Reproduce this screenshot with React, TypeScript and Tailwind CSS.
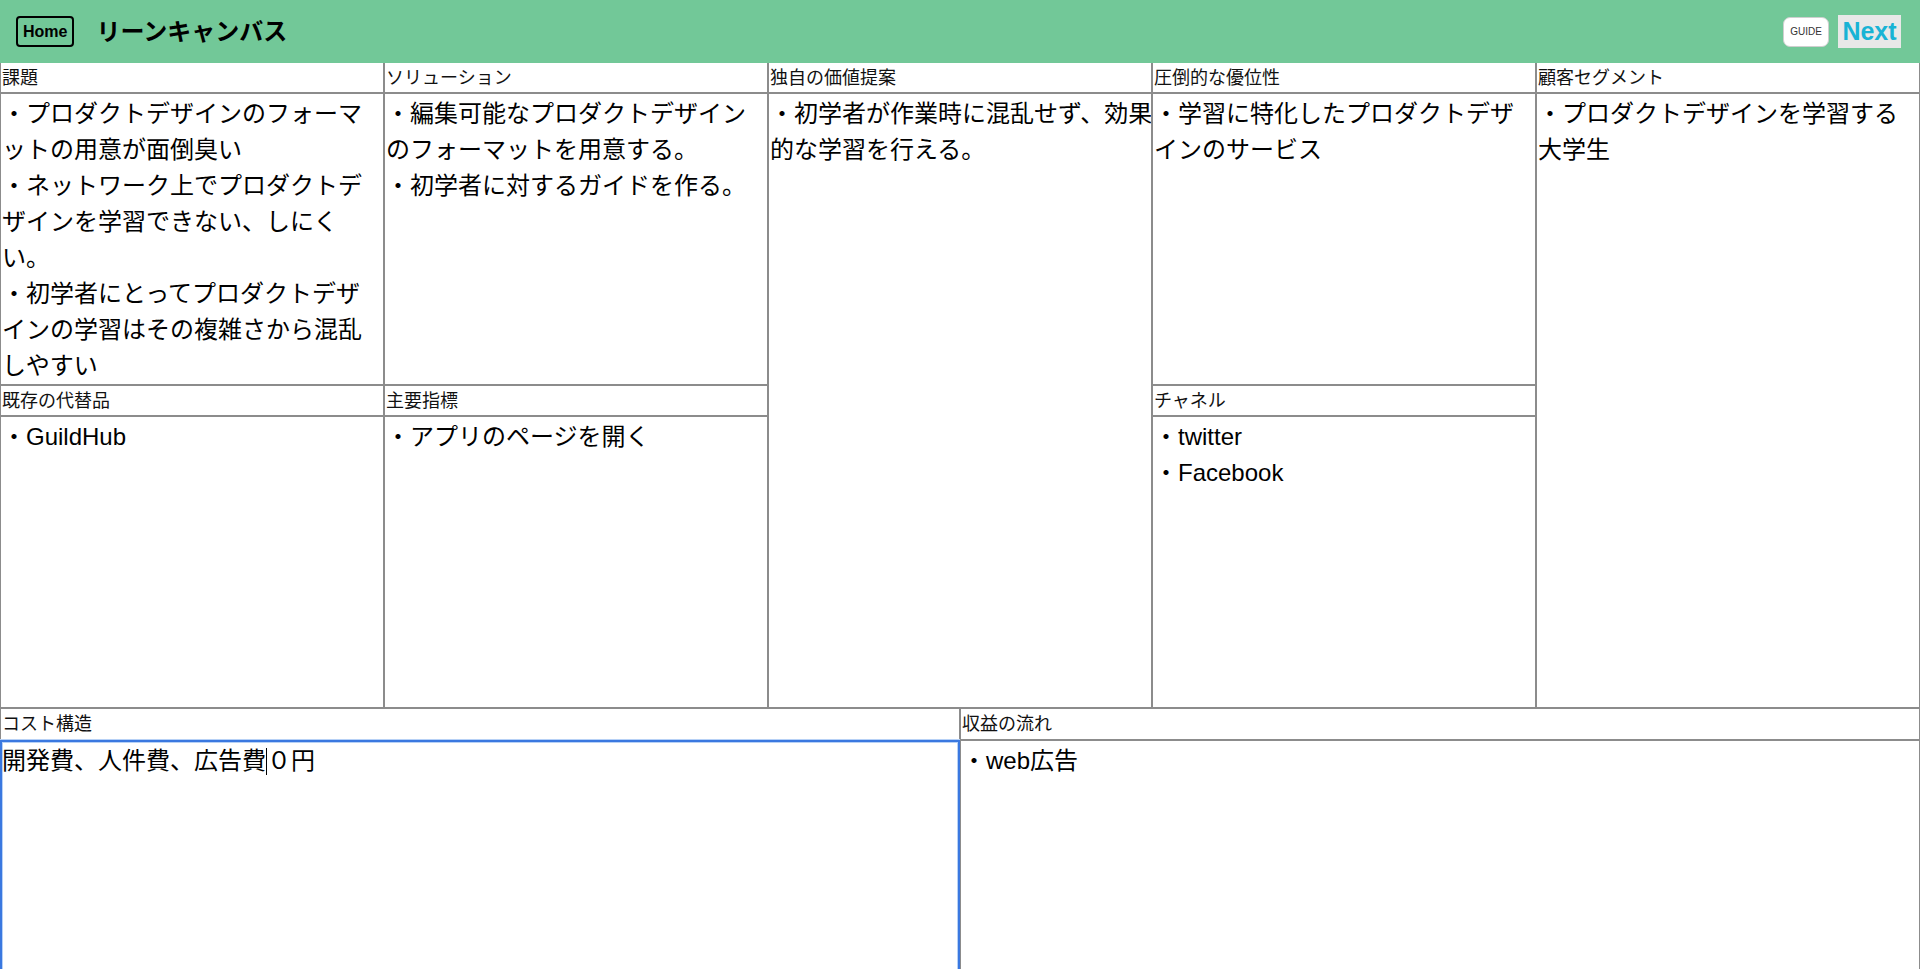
import React from "react";

const FONT = { fontFamily: '"Liberation Sans", "Noto Sans CJK JP", sans-serif' };

function Label({ text, className = "" }: { text: string; className?: string }) {
  return (
    <div className={"border border-[#8c8c8c] flex items-center pl-[1px] text-[18px] leading-none text-[#111] overflow-hidden " + className}>
      <span>{text}</span>
    </div>
  );
}

function Content({ lines, className = "" }: { lines: string[]; className?: string }) {
  return (
    <div className={"border border-[#8c8c8c] pl-[1px] pt-[2px] text-[24px] leading-[36px] text-black overflow-hidden " + className}>
      {lines.map((l, i) => (
        <div key={i} className="whitespace-nowrap">{l}</div>
      ))}
    </div>
  );
}

export default function App() {
  return (
    <div className="w-[1920px] h-[969px] overflow-hidden bg-white" style={FONT}>
      <header className="h-[63px] bg-[#72c898] flex items-center justify-between pl-[16px] pr-[19px]">
        <div className="flex items-center">
          <div className="border-2 border-black rounded-[4px] px-[5px] h-[31px] flex items-center text-[16px] font-bold text-black">
            Home
          </div>
          <div className="ml-[22px] text-[24px] font-bold text-black">リーンキャンバス</div>
        </div>
        <div className="flex items-center gap-[9px]">
          <div className="w-[46px] h-[30px] bg-white border border-[#cfcfcf] rounded-[7px] flex items-center justify-center text-[10px] text-[#333]">
            GUIDE
          </div>
          <div className="w-[63px] h-[33px] bg-[#e8e8e8] flex items-center justify-center text-[25px] font-bold text-[#18b3d5]">
            Next
          </div>
        </div>
      </header>

      <div className="grid grid-cols-5 grid-rows-[30px_292px_31px_292px]">
        <Label text="課題" className="border-t-0 col-start-1 row-start-1" />
        <Content
          className="col-start-1 row-start-2"
          lines={[
            "・プロダクトデザインのフォーマ",
            "ットの用意が面倒臭い",
            "・ネットワーク上でプロダクトデ",
            "ザインを学習できない、しにく",
            "い。",
            "・初学者にとってプロダクトデザ",
            "インの学習はその複雑さから混乱",
            "しやすい",
          ]}
        />
        <Label text="既存の代替品" className="col-start-1 row-start-3" />
        <Content className="col-start-1 row-start-4" lines={["・GuildHub"]} />

        <Label text="ソリューション" className="border-t-0 col-start-2 row-start-1" />
        <Content
          className="col-start-2 row-start-2"
          lines={["・編集可能なプロダクトデザイン", "のフォーマットを用意する。", "・初学者に対するガイドを作る。"]}
        />
        <Label text="主要指標" className="col-start-2 row-start-3" />
        <Content className="col-start-2 row-start-4" lines={["・アプリのページを開く"]} />

        <Label text="独自の価値提案" className="border-t-0 col-start-3 row-start-1" />
        <Content
          className="col-start-3 row-start-2 row-span-3"
          lines={["・初学者が作業時に混乱せず、効果", "的な学習を行える。"]}
        />

        <Label text="圧倒的な優位性" className="border-t-0 col-start-4 row-start-1" />
        <Content className="col-start-4 row-start-2" lines={["・学習に特化したプロダクトデザ", "インのサービス"]} />
        <Label text="チャネル" className="col-start-4 row-start-3" />
        <Content className="col-start-4 row-start-4" lines={["・twitter", "・Facebook"]} />

        <Label text="顧客セグメント" className="border-t-0 col-start-5 row-start-1" />
        <Content
          className="col-start-5 row-start-2 row-span-3"
          lines={["・プロダクトデザインを学習する", "大学生"]}
        />
      </div>

      <div className="grid grid-cols-2 grid-rows-[32px_292px]">
        <Label text="コスト構造" className="col-start-1 row-start-1" />
        <div className="col-start-1 row-start-2 border-2 border-[#3a78e0] shadow-[0_0_0_1px_#b7d1f6,inset_0_0_0_1px_#b7d1f6] pt-[1px] text-[24px] leading-[36px] text-black overflow-hidden">
          <div className="whitespace-nowrap flex items-center">
            <span>開発費、人件費、広告費</span>
            <span className="inline-block w-px h-[27px] bg-black" />
            <span>０円</span>
          </div>
        </div>
        <Label text="収益の流れ" className="col-start-2 row-start-1" />
        <Content className="col-start-2 row-start-2" lines={["・web広告"]} />
      </div>
    </div>
  );
}
